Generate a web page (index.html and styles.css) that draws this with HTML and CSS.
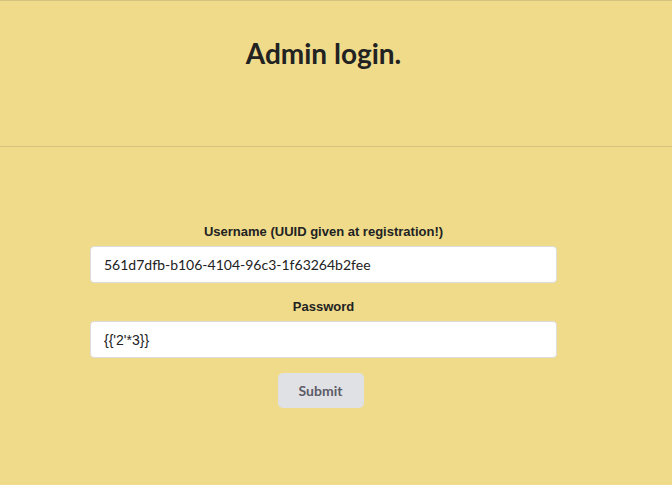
FILE: index.html
```html
<!DOCTYPE html>
<html>
<head>
<meta charset="utf-8">
<link rel="stylesheet" href="styles.css">
</head>
<body>
<div class="page">
  <header class="header">
    <h1 class="title">Admin login.</h1>
  </header>
  <form class="form">
    <label class="label" for="u">Username (UUID given at registration!)</label>
    <input class="input" id="u" type="text" value="561d7dfb-b106-4104-96c3-1f63264b2fee">
    <label class="label" for="p">Password</label>
    <input class="input input-pw" id="p" type="text" value="{{'2'*3}}">
    <button class="btn" type="button">Submit</button>
  </form>
</div>
</body>
</html>
```
FILE: styles.css
```css
html, body {
  margin: 0;
  padding: 0;
  background: #efdb8a;
  height: 100%;
}
.page {
  width: 647px;
}
.header {
  width: 672px;
  height: 147px;
  box-sizing: border-box;
  border-top: 1px solid #d5c27c;
  border-bottom: 1px solid #d5c27c;
}
.title {
  width: 647px;
  margin: 0;
  padding-top: 34px;
  text-align: center;
  font-family: Lato, sans-serif;
  font-weight: 700;
  font-size: 28px;
  line-height: 36px;
  color: #222;
}
.form {
  display: flex;
  flex-direction: column;
  align-items: center;
  padding-top: 76px;
}
.label {
  font-family: "Liberation Sans", Arial, sans-serif;
  font-weight: 700;
  font-size: 13px;
  line-height: 18px;
  color: #222;
  margin-bottom: 5px;
}
.input {
  width: 467px;
  height: 37px;
  box-sizing: border-box;
  border: 1px solid #dcdcdc;
  border-radius: 4px;
  background: #fff;
  padding: 0 13px;
  font-family: Lato, sans-serif;
  font-size: 14px;
  color: #222;
  margin: 0 0 15px 0;
  outline: none;
}
.input-pw {
  font-family: "Liberation Sans", Arial, sans-serif;
}
.btn {
  width: 86px;
  height: 35px;
  margin-right: 6px;
  border: none;
  border-radius: 5px;
  background: #e0e1e4;
  font-family: Lato, sans-serif;
  font-weight: 700;
  font-size: 14px;
  color: #5c5c68;
  cursor: pointer;
}
```
